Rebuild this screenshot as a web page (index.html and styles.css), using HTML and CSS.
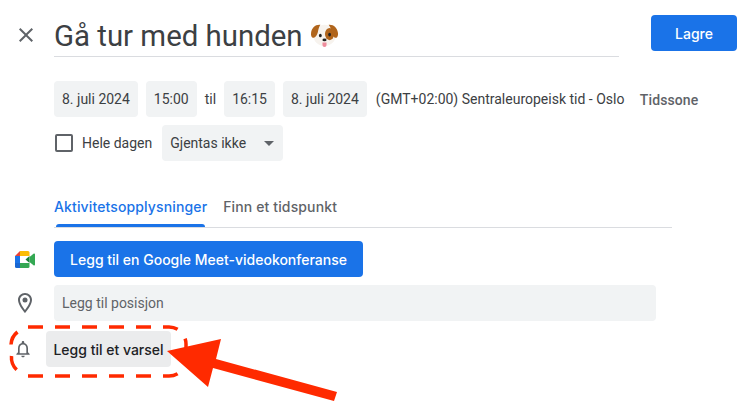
FILE: index.html
```html
<!DOCTYPE html>
<html lang="en">
<head>
  <meta charset="UTF-8">
  <meta name="viewport" content="width=device-width, initial-scale=1">
  <title>Gå tur med hunden</title>
  <link rel="stylesheet" href="styles.css">
</head>
<body>

<div class="page">
  <header class="top-row">
    <div class="close-icon">
      <svg width="24" height="24" viewBox="0 0 24 24"><path d="M19 6.41 17.59 5 12 10.59 6.41 5 5 6.41 10.59 12 5 17.59 6.41 19 12 13.41 17.59 19 19 17.59 13.41 12z" fill="#5f6368"/></svg>
    </div>
    <div class="title-field">
      <span>Gå tur med hunden</span>
      <svg class="dog" width="29" height="25" viewBox="0 0 30 27">
        <ellipse cx="15" cy="13.500" rx="12" ry="11.500" fill="#f7f3ee"/>
        <ellipse cx="20.500" cy="12" rx="5" ry="6.500" fill="#b0651c"/>
        <path d="M10.500 2C5 1.500 1.300 5.500.5 10.500c-.5 3 .6 5.500 2.300 5.500 2.500 0 4.200-3 5-6 .6-3 1.500-6 2.700-8z" fill="#b0651c"/>
        <path d="M19.500 2c5.500-.5 9.200 3.500 10 8.500.5 3-.6 5.500-2.300 5.500-2.500 0-3.700-3-4.200-6-.4-3-2.300-6-3.500-8z" fill="#b0651c"/>
        <ellipse cx="10.500" cy="13.500" rx="1.500" ry="2" fill="#222"/>
        <ellipse cx="20.500" cy="12.500" rx="1.500" ry="2" fill="#222"/>
        <ellipse cx="15" cy="18.300" rx="2.200" ry="1.500" fill="#222"/>
        <path d="M12.800 21h4.400v2.800a2.200 2.200 0 0 1-4.400 0z" fill="#ee8c9c"/>
      </svg>
    </div>
    <button class="btn-primary save-btn">Lagre</button>
  </header>

  <div class="time-row">
    <div class="chip">8. juli 2024</div>
    <div class="chip">15:00</div>
    <span class="til">til</span>
    <div class="chip">16:15</div>
    <div class="chip">8. juli 2024</div>
    <span class="tz-name">(GMT+02:00) Sentraleuropeisk tid - Oslo</span>
    <span class="tz-link">Tidssone</span>
  </div>

  <div class="repeat-row">
    <span class="checkbox"></span>
    <span class="allday">Hele dagen</span>
    <div class="chip repeat-select">
      Gjentas ikke
      <span class="caret"></span>
    </div>
  </div>

  <nav class="tabs">
    <span class="tab tab-active">Aktivitetsopplysninger</span>
    <span class="tab">Finn et tidspunkt</span>
  </nav>

  <div class="detail-row meet-row">
    <div class="row-icon">
      <svg width="20" height="17" viewBox="0 0 20 17">
        <path d="M5 0h8a1.500 1.500 0 0 1 1.500 1.500V5H5z" fill="#fbbc04"/>
        <path d="M5 0v5H0z" fill="#ea4335"/>
        <path d="M0 5h5v7H0z" fill="#1a73e8"/>
        <path d="M0 12h5v5H1.500A1.500 1.500 0 0 1 0 15.500z" fill="#1967d2"/>
        <path d="M5 12h9.500v3.500A1.500 1.500 0 0 1 13 17H5z" fill="#34a853"/>
        <path d="M14.500 5v7l-4-3.500z" fill="#188038"/>
        <path d="M14.500 6 18.800 2.600c.5-.4 1.200 0 1.200.6v10.600c0 .6-.7 1-1.200.6L14.500 11z" fill="#34a853"/>
      </svg>
    </div>
    <button class="btn-primary meet-btn">Legg til en Google Meet-videokonferanse</button>
  </div>

  <div class="detail-row location-row">
    <div class="row-icon">
      <svg width="24" height="24" viewBox="0 0 24 24"><path d="M12 2C8.130 2 5 5.130 5 9c0 5.250 7 13 7 13s7-7.750 7-13c0-3.870-3.130-7-7-7zm0 17.100C10 16.500 7 12 7 9c0-2.760 2.240-5 5-5s5 2.240 5 5c0 3-3 7.500-5 10.100z" fill="#5f6368"/><circle cx="12" cy="9" r="2.500" fill="#5f6368"/></svg>
    </div>
    <div class="location-input">Legg til posisjon</div>
  </div>

  <div class="detail-row alert-row">
    <div class="row-icon bell-icon">
      <svg width="20" height="20" viewBox="0 0 24 24"><path d="M18 16v-5c0-3.100-1.630-5.640-4.500-6.320V4c0-.83-.67-1.500-1.500-1.500s-1.500.67-1.500 1.500v.68C7.640 5.360 6 7.890 6 11v5l-2 2v1h16v-1zm-2 1H8v-6c0-2.480 1.510-4.500 4-4.500s4 2.020 4 4.500zM12 22c1.100 0 2-.9 2-2h-4c0 1.100.9 2 2 2z" fill="#5f6368"/></svg>
    </div>
    <button class="alert-btn">Legg til et varsel</button>
  </div>

  <svg class="markup" width="750" height="418" viewBox="0 0 750 418">
    <path d="M28 327H169A17 17 0 0 1 186 344V353M28 376H169A17 17 0 0 0 186 359M17.500 332A17 17 0 0 0 11 344.500M11.500 356A17 17 0 0 0 17.500 370.500" fill="none" stroke="#ff2a00" stroke-width="3.500" stroke-dasharray="15 12"/>
    <path d="M167 351 221 339 216 359 337 392 334 401 213 368 208 387z" fill="#ff2a00"/>
  </svg>
</div>

</body>
</html>
```

FILE: styles.css
```css
body {
  font-family: Roboto, sans-serif;
  background: #fff;
  margin: 0;
  padding: 0;
  color: #3c4043;
}

.page {
  position: relative;
  width: 750px;
  height: 418px;
  padding-top: 15px;
  box-sizing: border-box;
  overflow: hidden;
}

.top-row {
  display: flex;
  align-items: flex-start;
}

.close-icon {
  width: 54px;
  padding-top: 8px;
  padding-left: 14px;
  box-sizing: border-box;
}

.close-icon svg {
  display: block;
}

.title-field {
  width: 565px;
  height: 41px;
  border-bottom: 1px solid #dadce0;
  display: flex;
  align-items: center;
  font-size: 29.4px;
  line-height: 40px;
  color: #3c4043;
}

.dog {
  margin-left: 7px;
}

.btn-primary {
  background: #1a73e8;
  color: #fff;
  border: none;
  border-radius: 4px;
  height: 36px;
  font-family: Inter, sans-serif;
  font-size: 14px;
  font-weight: 500;
}

.save-btn {
  width: 86px;
  margin-left: 32px;
}

.time-row {
  display: flex;
  align-items: center;
  gap: 8px;
  margin-top: 24px;
  padding-left: 54px;
}

.chip {
  background: #f1f3f4;
  border-radius: 4px;
  height: 36px;
  line-height: 36px;
  padding: 0 8px;
  font-size: 14px;
  white-space: nowrap;
}

.til {
  font-size: 14px;
}

.tz-name {
  font-size: 14px;
  white-space: nowrap;
  margin-left: 1px;
  width: 248px;
}

.tz-link {
  font-size: 14px;
  font-weight: 500;
  letter-spacing: 0.1px;
  color: #5f6368;
  margin-left: 8px;
  margin-top: 2px;
}

.repeat-row {
  display: flex;
  align-items: center;
  margin-top: 8px;
  padding-left: 55px;
}

.checkbox {
  width: 14px;
  height: 14px;
  border: 2px solid #5f6368;
  border-radius: 2px;
}

.allday {
  font-size: 14px;
  margin-left: 9px;
}

.repeat-select {
  display: flex;
  align-items: center;
  margin-left: 10px;
  width: 105px;
  justify-content: space-between;
}

.caret {
  width: 0;
  height: 0;
  border-left: 5px solid transparent;
  border-right: 5px solid transparent;
  border-top: 5px solid #5f6368;
  margin-right: 1px;
}

.tabs {
  display: flex;
  gap: 16px;
  width: 618px;
  height: 38px;
  margin-top: 28px;
  margin-left: 54px;
  border-bottom: 1px solid #dadce0;
  font-family: Inter, sans-serif;
  font-size: 14px;
  font-weight: 500;
  letter-spacing: 0.13px;
  line-height: 36px;
}

.tab {
  color: #5f6368;
  position: relative;
  height: 38px;
  white-space: nowrap;
}

.tab-active {
  color: #1a73e8;
}

.tab-active::after {
  content: "";
  position: absolute;
  left: 2px;
  right: 2px;
  bottom: 0;
  height: 3px;
  background: #1a73e8;
  border-radius: 3px 3px 0 0;
}

.detail-row {
  display: flex;
  align-items: center;
}

.row-icon {
  width: 54px;
  display: flex;
  justify-content: center;
  padding-right: 5px;
  box-sizing: border-box;
}

.meet-row {
  margin-top: 13px;
}

.meet-btn {
  width: 309px;
  white-space: nowrap;
}

.location-row {
  margin-top: 8px;
}

.location-input {
  background: #f1f3f4;
  border-radius: 4px;
  width: 602px;
  height: 36px;
  line-height: 36px;
  box-sizing: border-box;
  padding-left: 8px;
  font-size: 14px;
  color: #5f6368;
}

.alert-row {
  margin-top: 10px;
}

.bell-icon {
  width: 46px;
  padding-right: 0;
}

.alert-btn {
  background: #ebeced;
  border: none;
  border-radius: 4px;
  width: 125px;
  height: 36px;
  padding: 0;
  font-family: Inter, sans-serif;
  font-size: 14px;
  font-weight: 500;
  color: #202124;
  white-space: nowrap;
}

.markup {
  position: absolute;
  top: 0;
  left: 0;
}
```
